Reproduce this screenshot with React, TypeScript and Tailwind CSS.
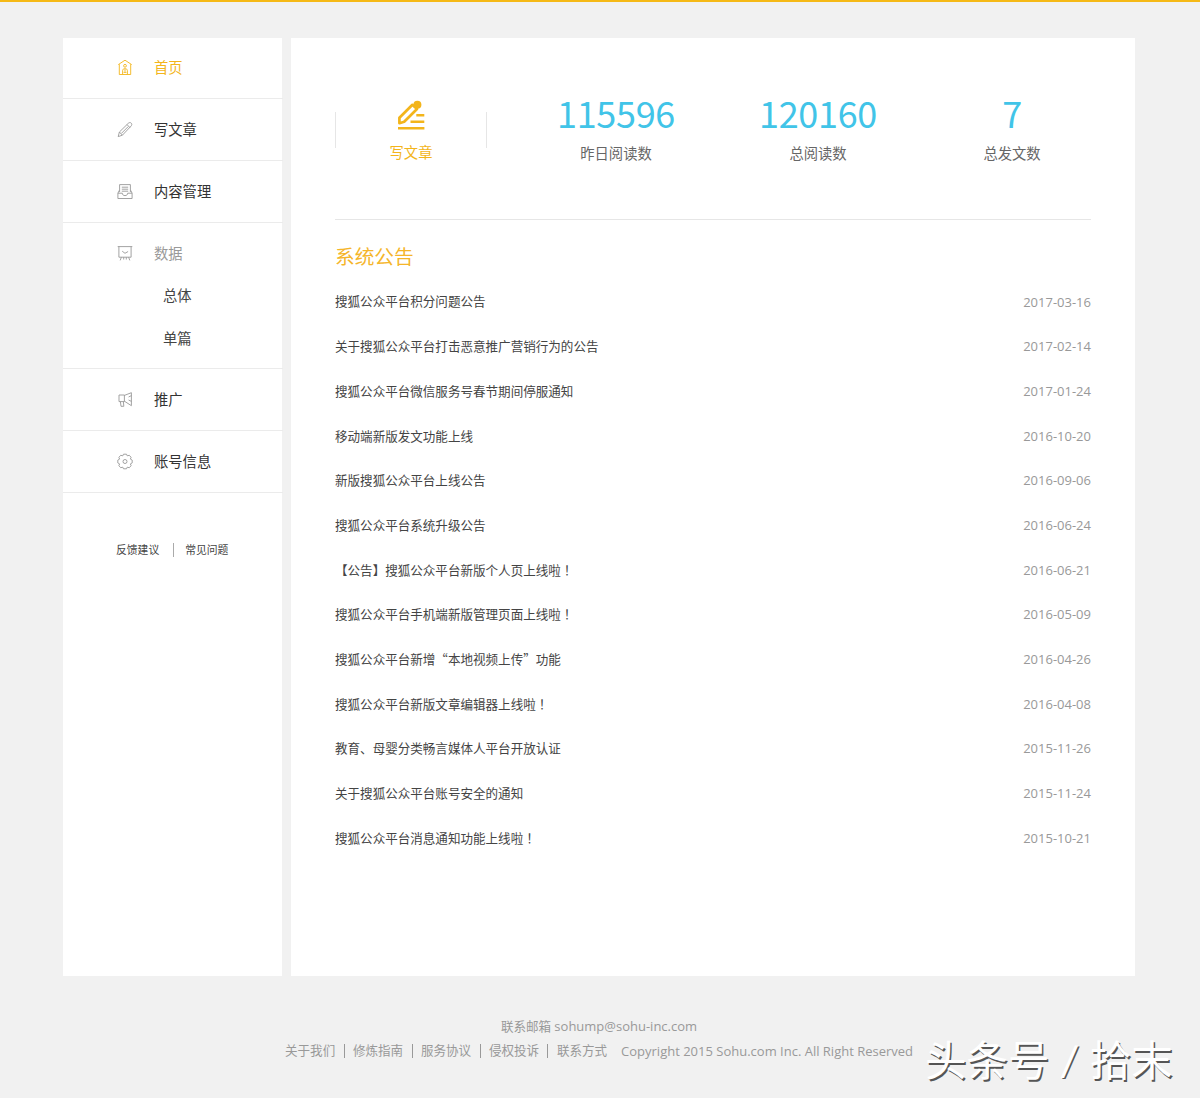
import type { ReactNode } from "react";
import clsx from "clsx";

interface MenuItem {
  label: string;
  icon: ReactNode;
  tone?: "active" | "muted";
  children?: string[];
}

const HomeIcon = () => (
  <svg viewBox="0 0 16 17" className="w-4 h-[17px]" fill="none" stroke="currentColor" strokeWidth="0.9">
    <path d="M1.3 5.6 8 1.2l6.7 4.4M2.3 5.2v10.3h11.4V5.2" />
    <circle cx="8" cy="6.8" r="1.4" />
    <path d="M5.6 15.3v-3.6c0-1.3.8-2 2.4-2s2.4.7 2.4 2v3.6M8 10.2v2.6M6.6 13.4h2.8" />
  </svg>
);

const PencilIcon = () => (
  <svg viewBox="0 0 16 17" className="w-4 h-[17px]" fill="none" stroke="currentColor" strokeWidth="0.9" strokeLinejoin="round">
    <path d="m1.2 15.6 1.2-4.6 8.8-8.6c1-1 2.2-1.1 3-.3s.8 2-.2 3L5.4 14.2ZM2.4 11l3 3.2M10 3.6l3 3M4.4 12.4l6.8-6.8" />
  </svg>
);

const ContentIcon = () => (
  <svg viewBox="0 0 16 17" className="w-4 h-[17px]" fill="none" stroke="currentColor" strokeWidth="0.9" strokeLinejoin="round">
    <path d="M.9 10.2v5.3h14.2v-5.3h-4.4c-.1 1.6-1.1 2.4-2.7 2.4s-2.6-.8-2.7-2.4ZM.9 10.2l1.4-2.9M15.1 10.2l-1.4-2.9M2.6 9V1.6h10.8V9M4.8 4.2h6.4M4.8 6.2h6.4M4.8 8.2h6.4" />
  </svg>
);

const DataIcon = () => (
  <svg viewBox="0 0 16 17" className="w-4 h-[17px]" fill="none" stroke="currentColor" strokeWidth="0.9">
    <path d="M.7 1.6h14.6M1.9 1.6v10.6h12.2V1.6M5.2 6.2 8 8.3l3.1-1.8M4.4 12.2l-1.2 3.2M6.7 12.2v2.3M9.3 12.2v2.3M11.6 12.2l1.2 3.2" />
  </svg>
);

const PromoteIcon = () => (
  <svg viewBox="0 0 16 17" className="w-4 h-[17px]" fill="none" stroke="currentColor" strokeWidth="0.9" strokeLinejoin="round">
    <path d="M2 4h5.4v6.6H2ZM7.4 4.4l7-2.7v13l-7-4.5M3.4 10.6l.6 4.7h2.8l-.4-4.7M11.6 6l2.8-1.4M11.6 9l2.8 1.4" />
  </svg>
);

const GearIcon = () => (
  <svg viewBox="0 0 16 17" className="w-4 h-[17px]" fill="none" stroke="currentColor" strokeWidth="0.9" strokeLinejoin="round">
    <path d="M6.5 1.2h3l.7 1.6 2.1-.5 1.8 2-.7 1.8 1.8 1v2.8l-1.8 1 .7 1.8-1.8 2-2.1-.5-.7 1.6h-3l-.7-1.6-2.1.5-1.8-2 .7-1.8-1.8-1V7.1l1.8-1-.7-1.8 1.8-2 2.1.5Z" />
    <circle cx="8" cy="8.5" r="2" />
  </svg>
);

const WriteIcon = () => (
  <svg viewBox="0 0 28 30" className="w-7 h-[30px]" fill="none" stroke="currentColor" strokeWidth="2.7">
    <path d="M2.4 23.2v-5.4l13-13 4.6 4.2L7.2 21.8Z" strokeLinejoin="round" />
    <circle cx="20.4" cy="4.7" r="4" fill="currentColor" stroke="none" />
    <path d="M19.3 15.3h8M13.5 21.8h13.8M1 28.3h26.4" strokeWidth="2.4" />
  </svg>
);

const menu: MenuItem[] = [
  { label: "首页", icon: <HomeIcon />, tone: "active" },
  { label: "写文章", icon: <PencilIcon /> },
  { label: "内容管理", icon: <ContentIcon /> },
  { label: "数据", icon: <DataIcon />, tone: "muted", children: ["总体", "单篇"] },
  { label: "推广", icon: <PromoteIcon /> },
  { label: "账号信息", icon: <GearIcon /> },
];

const notices = [
  { title: "搜狐公众平台积分问题公告", date: "2017-03-16" },
  { title: "关于搜狐公众平台打击恶意推广营销行为的公告", date: "2017-02-14" },
  { title: "搜狐公众平台微信服务号春节期间停服通知", date: "2017-01-24" },
  { title: "移动端新版发文功能上线", date: "2016-10-20" },
  { title: "新版搜狐公众平台上线公告", date: "2016-09-06" },
  { title: "搜狐公众平台系统升级公告", date: "2016-06-24" },
  { title: "【公告】搜狐公众平台新版个人页上线啦！", date: "2016-06-21" },
  { title: "搜狐公众平台手机端新版管理页面上线啦！", date: "2016-05-09" },
  { title: "搜狐公众平台新增“本地视频上传”功能", date: "2016-04-26" },
  { title: "搜狐公众平台新版文章编辑器上线啦！", date: "2016-04-08" },
  { title: "教育、母婴分类畅言媒体人平台开放认证", date: "2015-11-26" },
  { title: "关于搜狐公众平台账号安全的通知", date: "2015-11-24" },
  { title: "搜狐公众平台消息通知功能上线啦！", date: "2015-10-21" },
];

const footerLinks = ["关于我们", "修炼指南", "服务协议", "侵权投诉", "联系方式"];

function Sidebar() {
  return (
    <aside className="w-[219px] shrink-0 bg-white">
      <nav className="-mt-px">
        {menu.map((item) => (
          <div key={item.label} className="w-[220px] border-b border-[#ebebeb]">
            <div
              className={clsx(
                "flex h-[61px] items-center pl-[54px]",
                item.tone === "active" && "text-[#f3b51b]",
                item.tone === "muted" && "text-[#999]",
                !item.tone && "text-[#333]"
              )}
            >
              <span className={clsx("mr-[21px]", item.tone !== "active" && "text-[#999]")}>{item.icon}</span>
              <span className="text-[14.3px]">{item.label}</span>
            </div>
            {item.children && (
              <div className="-mt-[10px] pb-[8px] pl-[100px] text-[14.3px] text-[#444]">
                {item.children.map((child) => (
                  <div key={child} className="flex h-[43px] items-center">{child}</div>
                ))}
              </div>
            )}
          </div>
        ))}
      </nav>
      <div className="mt-[49px] flex items-center pl-[53px] text-[10.8px] leading-4 text-[#444]">
        <span>反馈建议</span>
        <span className="ml-[14px] mr-[11px] h-[14px] w-px bg-[#aaa]" />
        <span>常见问题</span>
      </div>
    </aside>
  );
}

function Stat({ value, label, className }: { value: string; label: string; className: string }) {
  return (
    <div className={clsx("flex shrink-0 flex-col items-center", className)}>
      <span className="-mt-[3px] font-['Noto_Sans_CJK_SC',sans-serif] text-[36px] leading-[44px] tracking-[-0.3px] text-[#41c4e8]">{value}</span>
      <span className="mt-[9px] text-[14.3px] leading-[22px] text-[#666]">{label}</span>
    </div>
  );
}

// the exclamation mark sits in the middle of its cell
function NoticeTitle({ title }: { title: string }) {
  const marked = title.endsWith("！");
  return (
    <span className="pb-px font-['Noto_Sans_CJK_SC',sans-serif] text-[#444]">
      {marked ? title.slice(0, -1) : title}
      {marked && <span className="font-['Noto_Sans_CJK_TC',sans-serif]">！</span>}
    </span>
  );
}

export default function App() {
  return (
    <div className="relative h-[1098px] w-[1200px] overflow-hidden border-t-2 border-[#f5b916] bg-[#f1f1f1] pt-9 font-['Open_Sans','Noto_Sans_CJK_SC',sans-serif]">
      <div className="ml-[63px] flex h-[938px] gap-[9px]">
        <Sidebar />

        <main className="w-[844px] shrink-0 bg-white px-[44px]">
          <section className="flex h-[182px] border-b border-[#e6e6e6] pt-[55px]">
            <div className="flex w-[152px] shrink-0 justify-between">
              <span className="mt-[19px] h-9 w-px bg-[#e6e6e6]" />
              <div className="flex flex-col items-center pt-[7px] text-[#f3b51b]">
                <WriteIcon />
                <span className="mt-[12px] text-[14.3px] leading-[22px]">写文章</span>
              </div>
              <span className="mt-[19px] h-9 w-px bg-[#e6e6e6]" />
            </div>
            <Stat value="115596" label="昨日阅读数" className="ml-[28px] w-[202px]" />
            <Stat value="120160" label="总阅读数" className="w-[202px]" />
            <Stat value="7" label="总发文数" className="w-[186px]" />
          </section>

          <h2 className="mt-[23px] text-[19.7px] leading-[28px] text-[#f5b52a]">系统公告</h2>
          <ul className="mt-[9px]">
            {notices.map((n) => (
              <li key={n.title} className="flex h-[44.7px] items-center justify-between text-[12.55px]">
                <NoticeTitle title={n.title} />
                <span className="text-[13px] text-[#999]">{n.date}</span>
              </li>
            ))}
          </ul>
        </main>
      </div>

      <footer className="mt-[37px] text-[12.55px] leading-[24.5px] text-[#999]">
        <p className="w-[1198px] pt-px text-center">
          联系邮箱 <span className="text-[13px]">sohump@sohu-inc.com</span>
        </p>
        <div className="-mt-px flex items-center pl-[285px]">
          {footerLinks.map((link, i) => (
            <div key={link} className="flex items-center">
              {i > 0 && <span className="mx-[8.4px] h-[14px] w-px bg-[#999]" />}
              <span>{link}</span>
            </div>
          ))}
          <span className="ml-[14px] text-[13px]">Copyright 2015 Sohu.com Inc. All Right Reserved</span>
        </div>
      </footer>

      <div className="absolute left-[925px] top-[1028px] flex gap-[12.5px] text-[41.5px] leading-[60px] text-white [text-shadow:1.5px_1.5px_0_#555]">
        <span>头条号</span>
        <span className="-skew-x-6 scale-y-110">/</span>
        <span>拾末</span>
      </div>
    </div>
  );
}
